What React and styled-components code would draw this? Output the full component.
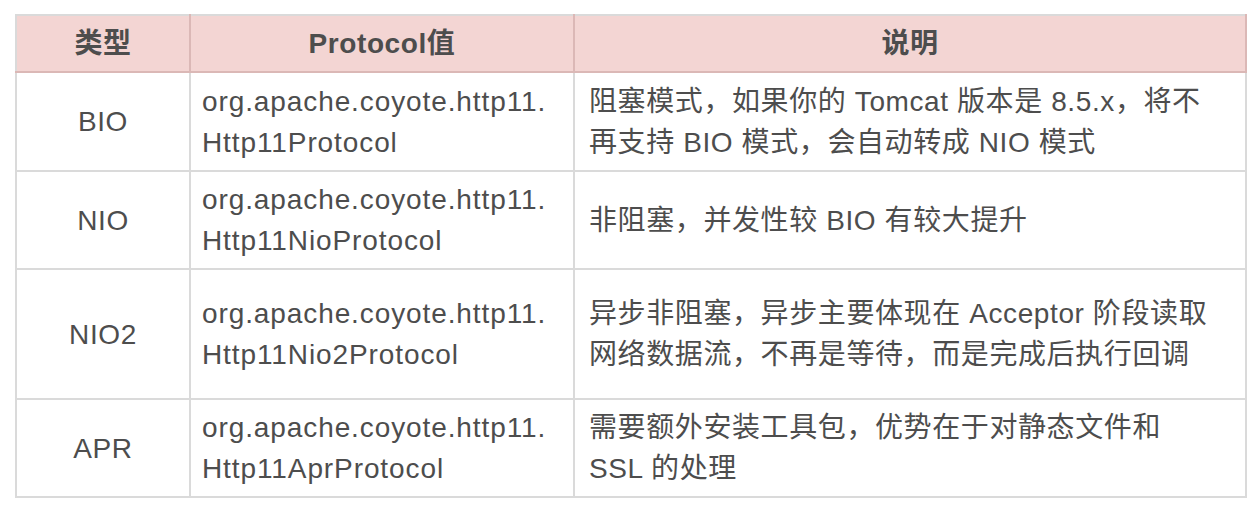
import React from 'react';
import styled, {createGlobalStyle} from 'styled-components';

const GlobalStyle = createGlobalStyle`
    body {
        margin: 0;
        background: #ffffff;
        font-family: "Liberation Sans", "Noto Sans CJK SC", sans-serif;
    }
`;

const Page = styled.div`
    padding: 14px 15px;
`;

const Table = styled.table`
    width: 1230px;
    border-collapse: collapse;
    table-layout: fixed;
    color: #4d4d4d;
    font-size: 28px;
    letter-spacing: 0.6px;
`;

const HeadCell = styled.th`
    height: 55px;
    padding: 0;
    background: #f3d5d3;
    border: 2px solid #dbb8b6;
    border-top-color: #dadada;
    border-left-color: ${props => props.first ? '#dadada' : '#dbb8b6'};
    font-weight: 700;
    text-align: center;
    vertical-align: middle;
    line-height: 41px;
`;

const Row = styled.tr`
    height: ${props => props.height}px;
`;

const Cell = styled.td`
    padding: 0 ${props => props.center ? 0 : props.pad}px;
    border: 2px solid #dadada;
    text-align: ${props => props.center ? 'center' : 'left'};
    vertical-align: middle;
    line-height: 41px;
    white-space: nowrap;
`;

// the class names are set a bit wider, as in the source
const ClassName = styled.span`
    letter-spacing: 0.9px;
`;

const rows = [
    {
        type: 'BIO',
        cls: 'Http11Protocol',
        desc: ['阻塞模式，如果你的 Tomcat 版本是 8.5.x，将不', '再支持 BIO 模式，会自动转成 NIO 模式'],
        height: 99,
    },
    {
        type: 'NIO',
        cls: 'Http11NioProtocol',
        desc: ['非阻塞，并发性较 BIO 有较大提升'],
        height: 98,
    },
    {
        type: 'NIO2',
        cls: 'Http11Nio2Protocol',
        desc: ['异步非阻塞，异步主要体现在 Acceptor 阶段读取', '网络数据流，不再是等待，而是完成后执行回调'],
        height: 130,
    },
    {
        type: 'APR',
        cls: 'Http11AprProtocol',
        desc: ['需要额外安装工具包，优势在于对静态文件和', 'SSL 的处理'],
        height: 98,
    },
];

export default function App() {
    return (
        <Page>
            <GlobalStyle />
            <Table>
                <colgroup>
                    <col style={{width: 174}} />
                    <col style={{width: 384}} />
                    <col style={{width: 672}} />
                </colgroup>
                <thead>
                    <tr>
                        <HeadCell first>类型</HeadCell>
                        <HeadCell>Protocol值</HeadCell>
                        <HeadCell>说明</HeadCell>
                    </tr>
                </thead>
                <tbody>
                    {rows.map(row => (
                        <Row key={row.type} height={row.height}>
                            <Cell center>{row.type}</Cell>
                            <Cell pad={11}>
                                <ClassName>org.apache.coyote.http11.<br />{row.cls}</ClassName>
                            </Cell>
                            <Cell pad={14}>
                                {row.desc.map((line, i) => (
                                    <React.Fragment key={i}>
                                        {i > 0 && <br />}
                                        {line}
                                    </React.Fragment>
                                ))}
                            </Cell>
                        </Row>
                    ))}
                </tbody>
            </Table>
        </Page>
    );
}
